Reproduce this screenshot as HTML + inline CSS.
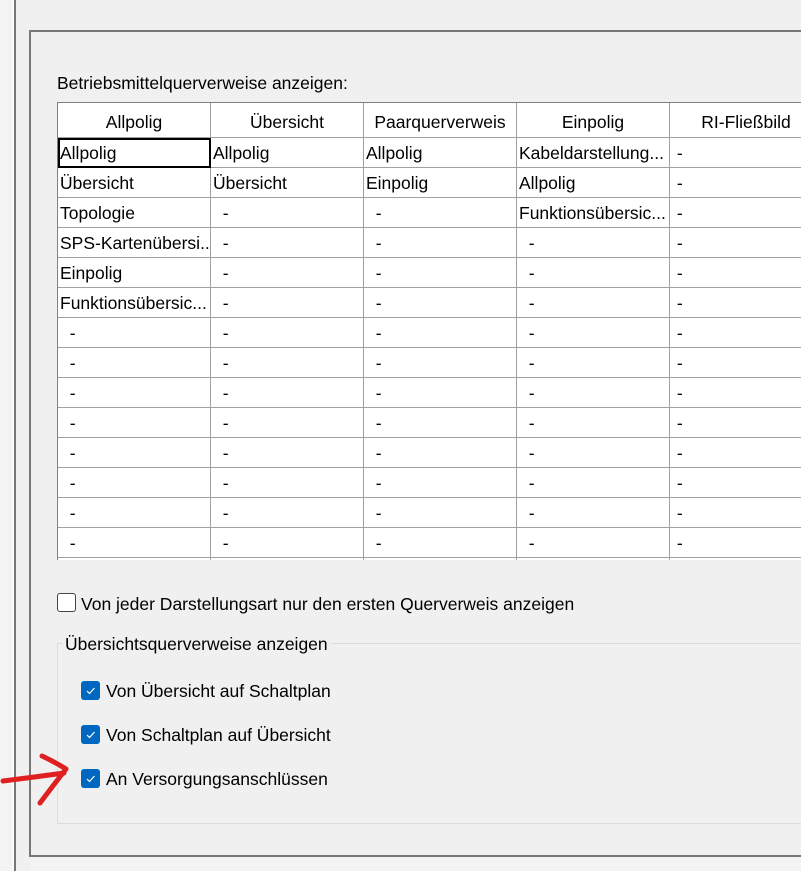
<!DOCTYPE html>
<html><head><meta charset="utf-8"><style>
*{margin:0;padding:0;box-sizing:border-box}
body{width:801px;height:871px;background:#f0f0f0;position:relative;overflow:hidden;font-family:"Liberation Sans",sans-serif;font-size:17.5px;color:#000}
.a{position:absolute}
table{border-collapse:collapse;table-layout:fixed;background:#fff}
td,th{border:1px solid #a0a0a0;height:30px;font-weight:normal;white-space:nowrap;overflow:hidden;padding:2px 2px 0;text-align:left}
th{height:35px;text-align:center;background:#fff;padding-top:4px}
.cb{position:absolute;width:19px;height:19px;border-radius:3px;background:#0067c0}
.cb svg{position:absolute;left:0;top:0}
</style></head><body>
<div class="a" style="left:0;top:0;width:12px;height:871px;background:#f3f3f3"></div>
<div class="a" style="left:12px;top:0;width:2px;height:871px;background:#fafafa"></div>
<div class="a" style="left:14px;top:0;width:2px;height:871px;background:#777"></div>
<div class="a" style="left:29px;top:30px;width:800px;height:827px;border-left:2px solid #777;border-top:2px solid #777;border-bottom:2px solid #777"></div>
<div class="a" style="left:31px;top:857px;width:770px;height:14px;background:#f3f3f3"></div>
<div class="a" style="left:57px;top:73px">Betriebsmittelquerverweise anzeigen:</div>
<div class="a" style="left:57px;top:102px;width:744px;height:458px;overflow:hidden;border-left:1px solid #808080;border-top:1px solid #808080">
<table style="width:765px;margin:-1px 0 0 -1px">
<colgroup><col style="width:153px"><col style="width:153px"><col style="width:153px"><col style="width:153px"><col style="width:153px"></colgroup>
<tr><th>Allpolig</th><th>Übersicht</th><th>Paarquerverweis</th><th>Einpolig</th><th>RI-Fließbild</th></tr>
<tr><td style="outline:2px solid #000;outline-offset:-2px">Allpolig</td><td>Allpolig</td><td>Allpolig</td><td>Kabeldarstellung...</td><td>&nbsp;-</td></tr>
<tr><td>Übersicht</td><td>Übersicht</td><td>Einpolig</td><td>Allpolig</td><td>&nbsp;-</td></tr>
<tr><td>Topologie</td><td>&nbsp;&nbsp;-</td><td>&nbsp;&nbsp;-</td><td>Funktionsübersic...</td><td>&nbsp;-</td></tr>
<tr><td>SPS-Kartenübersi...</td><td>&nbsp;&nbsp;-</td><td>&nbsp;&nbsp;-</td><td>&nbsp;&nbsp;-</td><td>&nbsp;-</td></tr>
<tr><td>Einpolig</td><td>&nbsp;&nbsp;-</td><td>&nbsp;&nbsp;-</td><td>&nbsp;&nbsp;-</td><td>&nbsp;-</td></tr>
<tr><td>Funktionsübersic...</td><td>&nbsp;&nbsp;-</td><td>&nbsp;&nbsp;-</td><td>&nbsp;&nbsp;-</td><td>&nbsp;-</td></tr>
<tr><td>&nbsp;&nbsp;-</td><td>&nbsp;&nbsp;-</td><td>&nbsp;&nbsp;-</td><td>&nbsp;&nbsp;-</td><td>&nbsp;-</td></tr>
<tr><td>&nbsp;&nbsp;-</td><td>&nbsp;&nbsp;-</td><td>&nbsp;&nbsp;-</td><td>&nbsp;&nbsp;-</td><td>&nbsp;-</td></tr>
<tr><td>&nbsp;&nbsp;-</td><td>&nbsp;&nbsp;-</td><td>&nbsp;&nbsp;-</td><td>&nbsp;&nbsp;-</td><td>&nbsp;-</td></tr>
<tr><td>&nbsp;&nbsp;-</td><td>&nbsp;&nbsp;-</td><td>&nbsp;&nbsp;-</td><td>&nbsp;&nbsp;-</td><td>&nbsp;-</td></tr>
<tr><td>&nbsp;&nbsp;-</td><td>&nbsp;&nbsp;-</td><td>&nbsp;&nbsp;-</td><td>&nbsp;&nbsp;-</td><td>&nbsp;-</td></tr>
<tr><td>&nbsp;&nbsp;-</td><td>&nbsp;&nbsp;-</td><td>&nbsp;&nbsp;-</td><td>&nbsp;&nbsp;-</td><td>&nbsp;-</td></tr>
<tr><td>&nbsp;&nbsp;-</td><td>&nbsp;&nbsp;-</td><td>&nbsp;&nbsp;-</td><td>&nbsp;&nbsp;-</td><td>&nbsp;-</td></tr>
<tr><td>&nbsp;&nbsp;-</td><td>&nbsp;&nbsp;-</td><td>&nbsp;&nbsp;-</td><td>&nbsp;&nbsp;-</td><td>&nbsp;-</td></tr>
<tr><td>&nbsp;&nbsp;-</td><td>&nbsp;&nbsp;-</td><td>&nbsp;&nbsp;-</td><td>&nbsp;&nbsp;-</td><td>&nbsp;-</td></tr>
</table></div>
<div class="a" style="left:57px;top:593px;width:19px;height:19px;border:1px solid #444;border-radius:3px;background:#fff"></div>
<div class="a" style="left:81px;top:594px">Von jeder Darstellungsart nur den ersten Querverweis anzeigen</div>
<div class="a" style="left:57px;top:643px;width:760px;height:181px;border:1px solid #dcdcdc"></div>
<div class="a" style="left:62px;top:634px;background:#f0f0f0;padding:0 3px">Übersichtsquerverweise anzeigen</div>
<div class="cb" style="left:81px;top:681px"><svg width="19" height="19"><path d="M6 10l2.5 2.5L13.5 7" stroke="#fff" stroke-width="1.2" fill="none"/></svg></div>
<div class="a" style="left:106px;top:681px">Von Übersicht auf Schaltplan</div>
<div class="cb" style="left:81px;top:725px"><svg width="19" height="19"><path d="M6 10l2.5 2.5L13.5 7" stroke="#fff" stroke-width="1.2" fill="none"/></svg></div>
<div class="a" style="left:106px;top:725px">Von Schaltplan auf Übersicht</div>
<div class="cb" style="left:81px;top:769px"><svg width="19" height="19"><path d="M6 10l2.5 2.5L13.5 7" stroke="#fff" stroke-width="1.2" fill="none"/></svg></div>
<div class="a" style="left:106px;top:769px">An Versorgungsanschlüssen</div>
<svg class="a" style="left:0;top:740px" width="80" height="80"><g stroke="#e02020" stroke-width="5" fill="none" stroke-linecap="round" stroke-linejoin="round"><path d="M3 41 Q35 37 64 33"/><path d="M42 16 Q55 22 66 29 Q52 47 40 63"/></g></svg>
</body></html>
